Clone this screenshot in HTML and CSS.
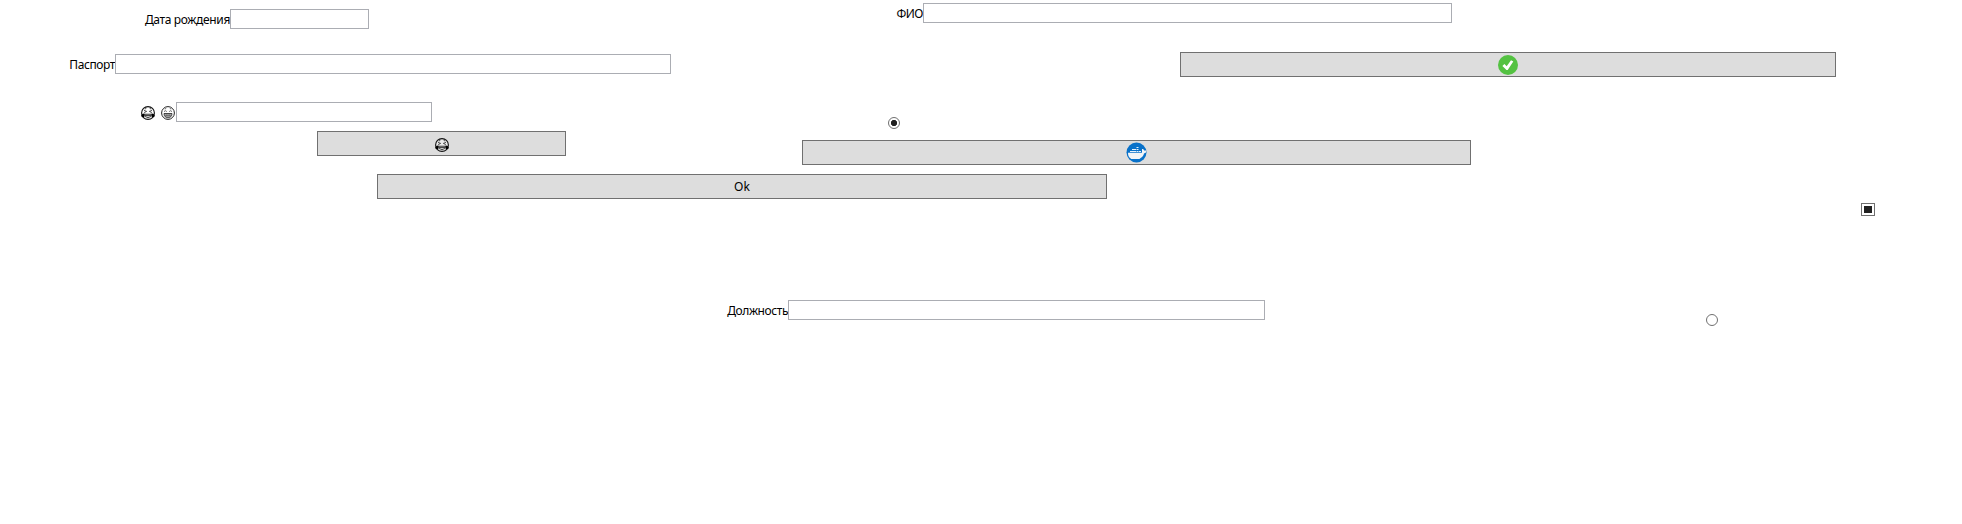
FILE: index.html
```html
<!DOCTYPE html>
<html lang="ru">
<head>
<meta charset="utf-8">
<title>Форма</title>
<link rel="stylesheet" href="styles.css">
</head>
<body>
<svg class="symbols" aria-hidden="true">
  <symbol id="joy" viewBox="0 0 14 14">
    <circle cx="7" cy="7" r="6.400" fill="#fff" fill-opacity=".4" stroke="#111" stroke-width="1.1"/>
    <path d="M3 4.400l2.600 1L3.200 6.600M11 4.400l-2.600 1 2.400 1.200M3.800 3l1.500-.6M10.200 3l-1.500-.6" fill="none" stroke="#222" stroke-width=".8"/>
    <path d="M3 7.800h8c0 2.600-1.600 4.200-4 4.200S3 10.400 3 7.800z" fill="#444"/>
    <path d="M4.200 8.400h5.600" stroke="#777" stroke-width=".8"/>
    <path d="M4.600 11.200q2.400-1.800 4.800 0" fill="none" stroke="#ddd" stroke-width=".9"/>
    <path d="M3.300 7.400C1 7.700 0 8.600.4 10.200c.6 1.300 2.400 1.600 3.100.4zM10.700 7.400c2.300.3 3.300 1.200 2.900 2.800-.6 1.300-2.400 1.600-3.100.4z" fill="#000"/>
  </symbol>
  <symbol id="grin" viewBox="0 0 14 14">
    <circle cx="7" cy="7" r="6.400" fill="#fff" stroke="#222" stroke-width="1"/>
    <path d="M3 5.600q1.400-1.800 2.800 0M8.200 5.600q1.400-1.800 2.800 0M3.800 3l1.400-.6M10.200 3l-1.400-.6" fill="none" stroke="#444" stroke-width=".8"/>
    <path d="M3 7.500h8c0 2.700-1.600 4.300-4 4.300S3 10.200 3 7.500z" fill="#bbb" stroke="#222" stroke-width=".8"/>
    <path d="M3.500 9.400h7M5.200 7.500v3.500M7 7.500v4M8.800 7.500v3.500" stroke="#444" stroke-width=".5"/>
  </symbol>
</svg>
<main class="form">
  <div class="row row-birth">
    <label class="field field-birth"><span class="caption">Дата рождения</span><input class="box" type="text"></label>
    <label class="field field-name"><span class="caption">ФИО</span><input class="box" type="text"></label>
  </div>
  <div class="row row-passport">
    <label class="field field-passport"><span class="caption">Паспорт</span><input class="box" type="text"></label>
    <button class="btn btn-check" type="button" aria-label="Готово">
      <svg width="20" height="20" viewBox="0 0 20 20"><circle cx="10" cy="10" r="10" fill="#54c242"/><path d="M4.400 10.900l2-1.800 2.300 2.100L13 5.200l2.300 1.200-5.600 8.500-1.200.1z" fill="#fff"/></svg>
    </button>
  </div>
  <div class="row row-emoji">
    <label class="field field-emoji"><span class="caption faces"><svg class="face"><use href="#joy"/></svg><svg class="face"><use href="#grin"/></svg></span><input class="box" type="text"></label>
    <input class="radio radio-first" type="radio" checked>
  </div>
  <div class="row row-buttons">
    <button class="btn btn-joy" type="button"><svg class="face"><use href="#joy"/></svg></button>
    <button class="btn btn-docker" type="button" aria-label="Docker">
      <svg width="21" height="21" viewBox="0 0 21 21"><circle cx="10.500" cy="10.500" r="10" fill="#0871c9"/><path d="M2 10.700h14V7h1.200l.9 1.500h1.900v2l-2 .9c-.3 1.900-1.500 3.400-3 4.300l-1.600 1.200H5.200l-2-1.600C2.400 13.700 2 12.500 2 10.700z" fill="#f1f4f7"/><path d="M4 9.500h6m.5 0h2m.5 0h2M6 7.500h4m.5 0h2M10.500 5.500h2" stroke="#e6f1fb" stroke-width="1"/></svg>
    </button>
  </div>
  <div class="row row-ok"><button class="btn btn-ok" type="button">Ok</button></div>
  <div class="row row-mark"><input class="mark" type="checkbox" checked></div>
  <div class="row row-position">
    <label class="field field-position"><span class="caption">Должность</span><input class="box" type="text"></label>
    <input class="radio radio-second" type="radio">
  </div>
</main>
</body>
</html>
```
FILE: styles.css
```css
* { box-sizing: border-box; }

body {
  margin: 0;
  background: #fff;
  color: #000;
  font: 12px/16px "Noto Sans", "Open Sans", sans-serif;
}

.symbols { display: none; }

.form {
  width: 1962px;
  height: 524px;
  padding-top: 3px;
  overflow: hidden;
}

.row { display: flex; align-items: flex-start; }

.row-birth { height: 51px; padding-left: 130px; }
.row-passport { height: 48px; padding-left: 55px; }
.row-emoji { height: 29px; padding-left: 126px; }
.row-buttons { height: 43px; padding-left: 317px; }
.row-ok { height: 29px; padding-left: 377px; }
.row-mark { height: 97px; padding-left: 1861px; }
.row-position { padding-left: 708px; }

.field { display: flex; flex: none; height: 20px; }
.field-birth { width: 239px; margin-top: 6px; }
.field-name { width: 572px; margin-left: 511px; }
.field-passport { width: 616px; }
.field-emoji { width: 306px; }
.field-position { width: 557px; }

.caption {
  flex: none;
  padding-top: 3px;
  text-align: right;
  white-space: nowrap;
}
.field-birth .caption { width: 100px; letter-spacing: -0.35px; }
.field-name .caption { width: 43px; letter-spacing: -0.5px; }
.field-passport .caption { width: 60px; letter-spacing: -0.4px; }
.field-emoji .caption { width: 50px; }
.field-position .caption { width: 80px; letter-spacing: -0.42px; }

.faces {
  display: flex;
  justify-content: flex-end;
  gap: 6px;
  padding: 4px 1px 0 0;
}
.face { display: block; width: 14px; height: 14px; }

.box {
  flex: 1;
  min-width: 0;
  height: 20px;
  margin: 0;
  padding: 0 2px;
  border: 1px solid #abadb3;
  border-radius: 0;
  background: #fff;
  font: inherit;
}

.btn {
  display: flex;
  flex: none;
  align-items: center;
  justify-content: center;
  height: 25px;
  margin: 0;
  padding: 0;
  border: 1px solid #707070;
  border-radius: 0;
  background: #ddd;
  color: #000;
  font: inherit;
}
.btn svg { display: block; }
.btn-check { width: 656px; margin: -2px 0 0 509px; }
.btn-joy { width: 249px; padding-top: 2px; }
.btn-docker { width: 669px; margin: 9px 0 0 236px; }
.btn-ok { width: 730px; }

.radio {
  flex: none;
  width: 12px;
  height: 12px;
  margin: 0;
  appearance: none;
  border: 1px solid #707070;
  border-radius: 50%;
  background: #fff;
}
.radio:checked { background: radial-gradient(circle, #212121 2.8px, #fff 3.4px); }
.radio-first { margin: 15px 0 0 456px; }
.radio-second { margin: 14px 0 0 441px; }

.mark {
  flex: none;
  width: 14px;
  height: 13px;
  margin: 0;
  padding: 2px;
  appearance: none;
  border: 1px solid #707070;
  background: #212121 content-box;
}
```
